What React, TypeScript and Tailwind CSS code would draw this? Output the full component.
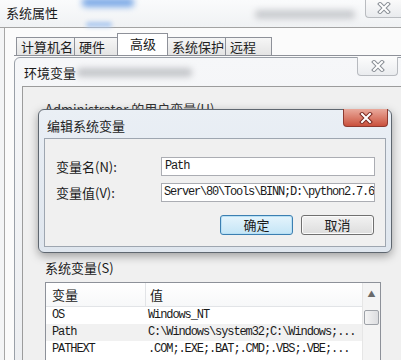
import React from "react";

const ui = { fontFamily: '"Noto Sans CJK SC", "Liberation Sans", sans-serif' };
const mono = { fontFamily: '"Liberation Mono", "Noto Sans CJK SC", monospace' };

// Win7 style close glyph
const CloseX = ({ active = false }: { active?: boolean }) => (
    <svg width="14" height="12" viewBox="0 0 14 12">
        <path d="M3 2 L11 10 M11 2 L3 10" stroke={active ? "#7a2a22" : "#8a8f96"} strokeWidth="4" strokeLinecap="square" />
        <path d="M3 2 L11 10 M11 2 L3 10" stroke="#ffffff" strokeWidth="2" strokeLinecap="square" />
    </svg>
);

const Tab = ({ label, w }: { label: string; w: string }) => (
    <div className={`${w} h-[18px] -ml-px border border-b-0 border-[#8e9199] bg-gradient-to-b from-[#f6f6f6] to-[#e4e4e4] pl-[4px] text-[13px] leading-[17px] text-[#1e1e1e]`}>
        {label}
    </div>
);

const rows = [
    { name: "OS", value: "Windows_NT", hl: false },
    { name: "Path", value: "C:\\Windows\\system32;C:\\Windows;...", hl: true },
    { name: "PATHEXT", value: ".COM;.EXE;.BAT;.CMD;.VBS;.VBE;...", hl: false },
    { name: "PSModulePath", value: "%SystemRoot%\\system32\\Windows...", hl: false },
];

export default function App() {
    return (
        <div className="relative w-[401px] h-[360px] overflow-hidden bg-[#f4f5f6] text-[#1a1a1a]" style={ui}>
            {/* 系统属性 title bar */}
            <div className="relative h-[28px] border-b border-[#a3a3a3] bg-gradient-to-b from-[#fafbfc] to-[#f0f2f4]">
                <div className="absolute left-[82px] top-[-2px] w-[52px] h-[9px] rounded bg-[#7aa8e6] blur-[3px]" />
                <div className="absolute left-[86px] top-[22px] w-[26px] h-[5px] rounded bg-[#a9c7ef] blur-[2px]" />
                <div className="absolute left-[255px] top-[10px] w-[100px] h-[9px] rounded bg-[#c9cbcf] blur-[3px]" />
                <span className="absolute left-[6px] top-[4px] text-[13px] leading-[18px]">系统属性</span>
                <div className="absolute right-0 top-[-1px] w-[36px] h-[19px] rounded-bl-[4px] border-l border-b border-[#b9bcc0] bg-gradient-to-b from-[#fbfbfb] to-[#e9ebee] flex items-center justify-center">
                    <CloseX />
                </div>
            </div>

            {/* tab page */}
            <div className="ml-[4px] h-[332px] border-l border-[#a7a7a7] bg-[#fbfbfb] pt-[7px]">
                <div className="flex items-end pl-[12px]">
                    <div className="flex items-end h-[20px]">
                        <Tab label="计算机名" w="w-[59px]" />
                        <Tab label="硬件" w="w-[44px]" />
                        <div className="w-[51px] h-[22px] -ml-px border border-b-0 border-[#8e9199] bg-white pl-[12px] text-[13px] leading-[19px]">高级</div>
                        <Tab label="系统保护" w="w-[59px]" />
                        <Tab label="远程" w="w-[47px]" />
                    </div>
                </div>
                <div className="ml-[9px] border-t border-[#8e9199]" />
            </div>

            {/* 环境变量 window */}
            <div className="absolute left-[14px] top-[57px] w-[400px] h-[320px] rounded-t-[6px] border border-[#9aa0a8] bg-gradient-to-b from-[#f6f7f9] to-[#eceef1]">
                <div className="relative h-[28px]">
                    <span className="absolute left-[9px] top-[6px] text-[13px] leading-[18px]">环境变量</span>
                    <div className="absolute left-[62px] top-[10px] w-[115px] h-[9px] rounded bg-[#c4c6ca] blur-[3px]" />
                    <div className="absolute left-[342px] top-[-1px] w-[41px] h-[19px] rounded-b-[4px] border border-t-0 border-[#b7babf] bg-gradient-to-b from-[#fcfcfc] to-[#eaecef] flex items-center justify-center">
                        <CloseX />
                    </div>
                </div>
                <div className="ml-[7px] h-[300px] border-l border-t border-[#9c9c9c] bg-[#f0f0f0] pl-[22px]">
                    <div className="pt-[13px] text-[13px] leading-[18px] text-[#333]">Administrator 的用户变量(U)</div>
                    <div className="h-[141px]" />
                    <div className="text-[13px] leading-[18px]">系统变量(S)</div>
                    {/* list */}
                    <div className="mt-[5px] w-[336px] h-[90px] border border-[#8d9199] bg-white flex">
                        <div className="flex-1 overflow-hidden">
                            <div className="flex h-[24px] border-b border-[#e2e4e7] bg-gradient-to-b from-white to-[#f7f8f9] text-[13px] leading-[23px]">
                                <div className="w-[100px] pl-[6px] border-r border-[#e2e4e7]">变量</div>
                                <div className="pl-[4px]">值</div>
                            </div>
                            {rows.map((r) => (
                                <div key={r.name} className={`flex h-[17px] text-[12px] leading-[17px] tracking-[-1.1px] whitespace-nowrap ${r.hl ? "bg-[#f1f1f1]" : ""}`} style={mono}>
                                    <div className="w-[100px] pl-[6px]">{r.name}</div>
                                    <div className="pl-[2px]">{r.value}</div>
                                </div>
                            ))}
                        </div>
                        {/* scrollbar */}
                        <div className="w-[18px] border-l border-[#e6e6e6] bg-[#f4f4f4] flex flex-col items-center">
                            <div className="h-[22px] flex items-center justify-center text-[8px] text-[#6a6a6a]">▲</div>
                            <div className="mt-[5px] w-[15px] h-[15px] rounded-[2px] border border-[#9ea2a8] bg-gradient-to-r from-[#f4f4f4] to-[#dcdde0]" />
                        </div>
                    </div>
                </div>
            </div>

            {/* 编辑系统变量 dialog */}
            <div className="absolute left-[38px] top-[109px] w-[354px] h-[144px] rounded-[6px] border border-[#5f6770] bg-gradient-to-b from-[#eaeff5] to-[#dfe6ee] shadow-[0_3px_10px_rgba(0,0,0,0.35)] flex flex-col">
                <div className="relative h-[28px]">
                    <span className="absolute left-[8px] top-[7px] text-[13px] leading-[18px] text-[#222]">编辑系统变量</span>
                    <div className="absolute left-[304px] top-[-1px] w-[45px] h-[18px] rounded-b-[4px] border border-t-0 border-[#8e3a30] bg-gradient-to-b from-[#e9a99c] to-[#c9503c] flex items-center justify-center">
                        <CloseX active />
                    </div>
                </div>
                <div className="mx-[5px] mb-[5px] flex-1 border border-[#9ea6b0] bg-[#f0f0f0] pl-[11px] pr-[10px] pt-[18px]">
                    <div className="grid grid-cols-[105px_1fr] gap-y-[7px] items-center">
                        <div className="text-[13px] leading-[18px]">变量名(N):</div>
                        <div className="h-[19px] border border-[#abadb3] bg-white pl-[3px] text-[12px] leading-[17px] tracking-[-1.15px] whitespace-nowrap overflow-hidden" style={mono}>Path</div>
                        <div className="text-[13px] leading-[18px]">变量值(V):</div>
                        <div className="h-[19px] border border-[#abadb3] bg-white pl-[2px] text-[12px] leading-[17px] tracking-[-1.2px] whitespace-nowrap overflow-hidden" style={mono}>Server\80\Tools\BINN;D:\python2.7.6</div>
                    </div>
                    <div className="mt-[13px] flex justify-end gap-[8px] pr-[1px]">
                        <div className="w-[73px] h-[20px] rounded-[3px] border border-[#3c7fb1] bg-gradient-to-b from-[#e5f4fc] to-[#c4e5f6] shadow-[inset_0_0_0_1px_#b8e0f5] text-center text-[13px] leading-[18px]">确定</div>
                        <div className="w-[73px] h-[20px] rounded-[3px] border border-[#707070] bg-gradient-to-b from-[#f2f2f2] to-[#dddddd] shadow-[inset_0_0_0_1px_#fbfbfb] text-center text-[13px] leading-[18px]">取消</div>
                    </div>
                </div>
            </div>
        </div>
    );
}
